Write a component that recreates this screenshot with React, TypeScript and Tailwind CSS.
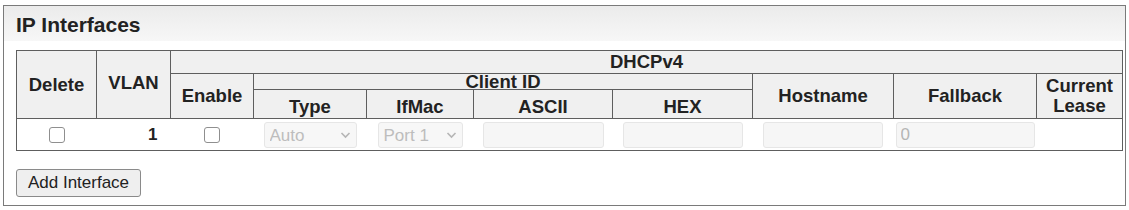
import React from 'react';

const font = { fontFamily: '"Liberation Sans", Arial, sans-serif' };

function Chevron() {
  return (
    <svg
      className="pointer-events-none absolute right-[6px] top-1/2 h-[8px] w-[11px] -translate-y-1/2"
      viewBox="0 0 11 8"
      fill="none"
    >
      <path d="M1.5 2 L5.5 6 L9.5 2" stroke="#b5b5b5" strokeWidth="1.6" />
    </svg>
  );
}

function FakeSelect({ value, width }: { value: string; width: string }) {
  return (
    <div className={`relative mx-auto h-[26px] ${width}`}>
      <select
        disabled
        defaultValue={value}
        className="h-full w-full appearance-none rounded-[3px] border border-[#e6e6e6] bg-[#f7f7f7] pl-[5px] text-left text-[17px] text-[#bdbdbd]"
      >
        <option>{value}</option>
      </select>
      <Chevron />
    </div>
  );
}

function TextBox({ width, value = '' }: { width: string; value?: string }) {
  return (
    <input
      disabled
      defaultValue={value}
      className={`mx-auto block h-[26px] ${width} rounded-[3px] border border-[#e6e6e6] bg-[#f6f6f6] px-[4px] text-[17px] text-[#b5b5b5]`}
    />
  );
}

function Check() {
  return (
    <input
      type="checkbox"
      className="mx-auto block h-[16px] w-[16px] appearance-none rounded-[3px] border border-[#8f8f8f] bg-white"
    />
  );
}

const th = 'border border-[#5e5e5e] bg-[#f0f0f0] p-0 text-center align-middle text-[18.5px] font-bold text-[#222]';

export default function App() {
  return (
    <div style={font} className="bg-white pt-[5px] pl-[3px]">
      <div className="h-[201px] w-[1123px] border border-[#7a7a7a] bg-white">
        <div className="h-[35px] bg-gradient-to-b from-[#ebebeb] to-[#f7f7f7] pl-[12px] pt-[7px]">
          <h1 className="text-[21px] font-bold leading-[24px] text-[#222]">IP Interfaces</h1>
        </div>

        <div className="pl-[12px] pt-[9px]">
          <table className="w-[1106px] table-fixed border-collapse border border-[#5e5e5e]">
            <colgroup>
              <col className="w-[80px]" />
              <col className="w-[74px]" />
              <col className="w-[83px]" />
              <col className="w-[113px]" />
              <col className="w-[107px]" />
              <col className="w-[139px]" />
              <col className="w-[140px]" />
              <col className="w-[141px]" />
              <col className="w-[143px]" />
              <col className="w-[86px]" />
            </colgroup>
            <thead>
              <tr className="h-[23px]">
                <th rowSpan={3} className={`${th} leading-[20px]`}>Delete</th>
                <th rowSpan={3} className={`${th} pb-[4px] leading-[20px]`}>VLAN</th>
                <th colSpan={8} className={`${th} leading-[16px]`}>DHCPv4</th>
              </tr>
              <tr className="h-[16px]">
                <th rowSpan={2} className={`${th} leading-[20px]`}>Enable</th>
                <th colSpan={4} className={`${th} leading-[14px]`}>Client ID</th>
                <th rowSpan={2} className={`${th} leading-[20px]`}>Hostname</th>
                <th rowSpan={2} className={`${th} leading-[20px]`}>Fallback</th>
                <th rowSpan={2} className={`${th} leading-[20px]`}>
                  Current
                  <br />
                  Lease
                </th>
              </tr>
              <tr className="h-[29px]">
                <th className={`${th} pt-[6px] leading-[20px]`}>Type</th>
                <th className={`${th} pt-[6px] leading-[20px]`}>IfMac</th>
                <th className={`${th} pt-[6px] leading-[20px]`}>ASCII</th>
                <th className={`${th} pt-[6px] leading-[20px]`}>HEX</th>
              </tr>
            </thead>
            <tbody>
              <tr className="h-[32px]">
                <td className="p-0 align-middle">
                  <Check />
                </td>
                <td className="p-0 pr-[13px] text-right align-middle text-[17px] font-bold text-[#222]">1</td>
                <td className="p-0 align-middle">
                  <Check />
                </td>
                <td className="p-0 align-middle">
                  <FakeSelect value="Auto" width="w-[93px]" />
                </td>
                <td className="p-0 align-middle">
                  <FakeSelect value="Port 1" width="w-[85px]" />
                </td>
                <td className="p-0 align-middle">
                  <TextBox width="w-[121px]" />
                </td>
                <td className="p-0 align-middle">
                  <TextBox width="w-[120px]" />
                </td>
                <td className="p-0 align-middle">
                  <TextBox width="w-[120px]" />
                </td>
                <td className="p-0 align-middle">
                  <TextBox width="w-[139px]" value="0" />
                </td>
                <td className="p-0" />
              </tr>
            </tbody>
          </table>

          <button
            type="button"
            className="mt-[18px] h-[28px] w-[125px] rounded-[3px] border border-[#8a8a8a] bg-[#efefef] text-[17px] text-[#222]"
          >
            Add Interface
          </button>
        </div>
      </div>
    </div>
  );
}
